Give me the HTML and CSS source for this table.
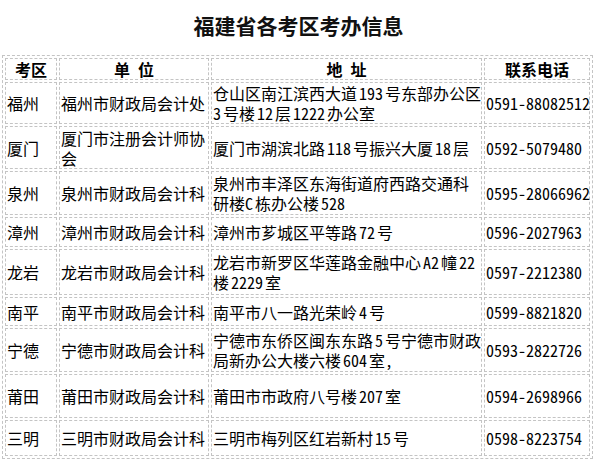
FILE: index.html
```html
<!DOCTYPE html>
<html lang="zh-CN">
<head>
<meta charset="utf-8">
<title>福建省各考区考办信息</title>
<link rel="stylesheet" href="styles.css">
</head>
<body>
<h1 class="title">福建省各考区考办信息</h1>
<table class="info">
  <thead>
    <tr class="head">
      <th class="c-area">考区</th>
      <th class="c-unit">单　位</th>
      <th class="c-addr">地　址</th>
      <th class="c-tel">联系电话</th>
    </tr>
  </thead>
  <tbody>
    <tr class="h42">
      <td>福州</td><td>福州市财政局会计处</td>
      <td>仓山区南江滨西大道 193 号东部办公区 3 号楼 12 层 1222 办公室</td>
      <td>0591-88082512</td>
    </tr>
    <tr class="h43">
      <td>厦门</td><td>厦门市注册会计师协会</td>
      <td>厦门市湖滨北路 118 号振兴大厦 18 层</td>
      <td>0592-5079480</td>
    </tr>
    <tr class="h44">
      <td>泉州</td><td>泉州市财政局会计科</td>
      <td>泉州市丰泽区东海街道府西路交通科研楼C 栋办公楼 528</td>
      <td>0595-28066962</td>
    </tr>
    <tr class="h30">
      <td>漳州</td><td>漳州市财政局会计科</td>
      <td>漳州市芗城区平等路 72 号</td>
      <td>0596-2027963</td>
    </tr>
    <tr class="h46">
      <td>龙岩</td><td>龙岩市财政局会计科</td>
      <td>龙岩市新罗区华莲路金融中心 A2 幢 22 楼 2229 室</td>
      <td>0597-2212380</td>
    </tr>
    <tr class="h29">
      <td>南平</td><td>南平市财政局会计科</td>
      <td>南平市八一路光荣岭 4 号</td>
      <td>0599-8821820</td>
    </tr>
    <tr class="h44">
      <td>宁德</td><td>宁德市财政局会计科</td>
      <td>宁德市东侨区闽东东路 5 号宁德市财政局新办公大楼六楼 604 室,</td>
      <td>0593-2822726</td>
    </tr>
    <tr class="h44">
      <td>莆田</td><td>莆田市财政局会计科</td>
      <td>莆田市市政府八号楼 207 室</td>
      <td>0594-2698966</td>
    </tr>
    <tr class="h36">
      <td>三明</td><td>三明市财政局会计科</td>
      <td>三明市梅列区红岩新村 15 号</td>
      <td>0598-8223754</td>
    </tr>
  </tbody>
</table>
</body>
</html>
```
FILE: styles.css
```css
html, body {
  margin: 0;
  padding: 0;
  background: #fff;
}
body {
  font-family: "Noto Sans CJK SC", "Liberation Sans", sans-serif;
  color: #000;
}
.title {
  margin: 0;
  padding-top: 13px;
  height: 55px;
  box-sizing: border-box;
  text-align: center;
  font-size: 21px;
  line-height: 24px;
  font-weight: bold;
  color: #111;
}
.info {
  margin: 0 0 0 2px;
  width: 591px;
  table-layout: fixed;
  border-collapse: separate;
  border-spacing: 2px;
  border: 1px dashed #c4c4c4;
  font-size: 16px;
  line-height: 20px;
  font-feature-settings: "hwid";
  word-spacing: -6px;
}
.info th,
.info td {
  border: 1px dashed #c4c4c4;
  padding: 0 1px;
  box-sizing: border-box;
  vertical-align: middle;
  text-align: left;
}
.info td:nth-child(3) {
  padding: 0 0 0 1px;
}
.info th {
  font-weight: bold;
  text-align: center;
  height: 21px;
  padding: 0;
  word-spacing: 0;
}
.c-area { width: 52px; }
.c-unit { width: 150px; }
.c-addr { width: 271px; }
.c-tel  { width: 106px; }
.info td:nth-child(4) {
  white-space: nowrap;
}
.h29 { height: 29px; }
.h30 { height: 30px; }
.h36 { height: 36px; }
.h42 { height: 42px; }
.h43 { height: 43px; }
.h44 { height: 44px; }
.h46 { height: 46px; }
```
